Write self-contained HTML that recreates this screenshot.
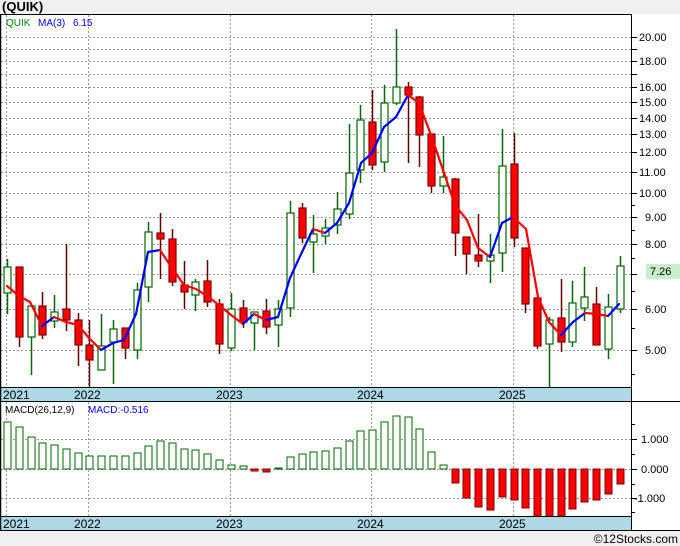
<!DOCTYPE html>
<html><head><meta charset="utf-8"><style>
html,body{margin:0;padding:0;background:#f0f0f0;}
svg{display:block;font-family:"Liberation Sans",sans-serif;}
</style></head><body>
<svg id="s" width="680" height="546" xmlns="http://www.w3.org/2000/svg">
<rect x="0" y="0" width="680" height="546" fill="#f0f0f0"/>
<rect x="0" y="14" width="631" height="373" fill="#fff"/>
<rect x="0" y="402" width="631" height="114" fill="#fff"/>
<rect x="631" y="14" width="49" height="516" fill="#fff"/>
<g id="grid"></g>
<rect x="0" y="387" width="631" height="15" fill="#add8e6"/>
<rect x="0" y="516" width="631" height="14" fill="#add8e6"/>
<g id="chart"></g>
<line x1="0" y1="14.5" x2="632" y2="14.5" stroke="#000"/>
<line x1="0.5" y1="14" x2="0.5" y2="530" stroke="#000" stroke-width="1.5"/>
<line x1="631.5" y1="14" x2="631.5" y2="530" stroke="#000"/>
<line x1="0" y1="387.5" x2="632" y2="387.5" stroke="#000"/>
<line x1="0" y1="401.5" x2="680" y2="401.5" stroke="#000"/>
<line x1="0" y1="516.5" x2="632" y2="516.5" stroke="#000"/>
<line x1="0" y1="530.5" x2="680" y2="530.5" stroke="#000"/>
<text x="2" y="11" font-size="13" font-weight="bold" fill="#000">(QUIK)</text>
<text x="6" y="26" font-size="10" fill="#008000">QUIK</text>
<text x="38" y="26" font-size="10" fill="#0000ff">MA(3)</text>
<text x="73" y="26" font-size="10" fill="#0000ff">6.15</text>
<text x="5" y="413" font-size="10" fill="#000">MACD(26,12,9)</text>
<text x="88" y="413" font-size="10" fill="#0000ff">MACD:-0.516</text>
<g font-size="12" fill="#000">
<text x="3" y="399">2021</text><text x="74" y="399">2022</text><text x="216" y="399">2023</text><text x="357" y="399">2024</text><text x="499" y="399">2025</text>
<text x="3" y="528">2021</text><text x="74" y="528">2022</text><text x="216" y="528">2023</text><text x="357" y="528">2024</text><text x="499" y="528">2025</text>
</g>
<rect x="646" y="264" width="34" height="15" fill="#c8f0c8"/>
<text x="650" y="275" font-size="11" fill="#000">7.26</text>
<g id="axis" font-size="11" fill="#000"></g>
<text x="678" y="543" font-size="12" fill="#000" text-anchor="end">©12Stocks.com</text>
</svg>
<script>
var NS="http://www.w3.org/2000/svg";
function el(p,t,a,txt){var e=document.createElementNS(NS,t);for(var k in a)e.setAttribute(k,a[k]);if(txt!=null)e.textContent=txt;document.getElementById(p).appendChild(e);return e;}
function Y(p){return 350-225.8*Math.log(p/5);}
for(var p=5;p<=20;p++){var y=Math.round(Y(p))+0.5;el("grid","line",{x1:1,y1:y,x2:631,y2:y,stroke:"#999","stroke-dasharray":"2,2"});el("axis","line",{x1:631,y1:y,x2:637,y2:y,stroke:"#000"});}
[4.5,5.5,6.5,7.5,8.5,9.5].forEach(function(p){var y=Math.round(Y(p))+0.5;el("axis","line",{x1:631,y1:y,x2:635,y2:y,stroke:"#000"});});
[[20,"20.00"],[18,"18.00"],[16,"16.00"],[15,"15.00"],[14,"14.00"],[13,"13.00"],[12,"12.00"],[11,"11.00"],[10,"10.00"],[9,"9.00"],[8,"8.00"],[6,"6.00"],[5,"5.00"]].forEach(function(a){el("axis","text",{x:a[0]>=10?639:645,y:Math.round(Y(a[0]))+4},a[1]);});
[[439,"1.000"],[469,"0.000"],[498,"-1.000"]].forEach(function(a){el("grid","line",{x1:1,y1:a[0]+.5,x2:631,y2:a[0]+.5,stroke:"#999","stroke-dasharray":"2,2"});el("axis","line",{x1:631,y1:a[0]+.5,x2:637,y2:a[0]+.5,stroke:"#000"});el("axis","text",{x:a[1][0]=="-"?634:641,y:a[0]+4},a[1]);});
[424,454,484,512].forEach(function(y){el("axis","line",{x1:631,y1:y+.5,x2:635,y2:y+.5,stroke:"#000"});});
[6,88,230,371,513].forEach(function(x){el("grid","line",{x1:x+.5,y1:15,x2:x+.5,y2:387,stroke:"#999","stroke-dasharray":"2,2"});el("grid","line",{x1:x+.5,y1:402,x2:x+.5,y2:516,stroke:"#999","stroke-dasharray":"2,2"});});
var C=[[267,293,259,314,"g"],[267,337,267,347,"r"],[306,337,306,375,"g"],[306,335,292,339,"r"],[312,321,295,328,"g"],[309,320,244,331,"r"],[320,345,313,366,"r"],[345,360,320,387,"r"],[346,370,314,370,"g"],[329,342,320,384,"g"],[328,348,328,359,"r"],[290,350,283,359,"g"],[232,287,222,302,"g"],[233,239,213,279,"r"],[239,282,229,286,"r"],[285,292,261,309,"r"],[282,295,279,311,"g"],[281,302,260,307,"r"],[304,344,299,354,"r"],[309,348,293,351,"g"],[308,322,300,328,"r"],[312,323,312,350,"g"],[311,327,299,334,"r"],[309,325,300,347,"g"],[213,308,201,317,"g"],[208,238,203,243,"r"],[234,242,215,273,"g"],[228,236,219,244,"g"],[209,225,192,234,"g"],[173,214,124,219,"g"],[120,170,105,183,"g"],[122,165,90,170,"r"],[103,162,85,172,"g"],[87,103,29,105,"g"],[87,95,82,163,"r"],[97,135,96,167,"r"],[134,186,134,193,"r"],[177,186,136,193,"g"],[179,233,178,256,"r"],[237,254,237,274,"r"],[255,261,214,267,"r"],[255,261,234,283,"g"],[166,253,129,272,"g"],[164,238,133,247,"r"],[248,304,248,313,"r"],[298,346,298,349,"r"],[320,344,317,387,"g"],[318,342,279,352,"r"],[303,342,281,347,"g"],[297,308,267,321,"g"],[304,345,287,345,"r"],[307,349,294,359,"g"],[266,309,256,313,"g"]];
var M=[422,427,437,443,445,449,453,456,456,456,456,453,446,441,443,449,450,454,460,465,466,471,472,468,457,454,452,451,448,441,431,430,422,416,417,429,452,465,483,498,507,510,497,500,508,516,516,516,509,502,500,494,484];
function X(i){return 7+11.78*i;}
C.forEach(function(c,i){var x=Math.round(X(i));var g=c[4]=="g";
el("chart","line",{x1:x+.5,y1:c[2],x2:x+.5,y2:c[3],stroke:g?"#006600":"#600000","stroke-width":1.5});
el("chart","rect",{x:x-3,y:c[0],width:7,height:Math.max(2,c[1]-c[0]),fill:g?"#fff":"#ff0000",stroke:g?"#006600":"#800000","stroke-width":1.2});});
var P=[[7,286],[19,296],[30,302],[42,326],[54,317],[66,322],[78,325],[89,338],[101,350],[113,343],[124,340],[136,314],[148,252],[160,250],[172,268],[184,285],[196,289],[207,296],[219,305],[231,315],[243,324],[254,314],[266,320],[278,317],[290,278],[302,252],[313,229],[325,233],[337,223],[349,203],[361,163],[372,153],[384,127],[396,117],[408,95],[419,103],[431,135],[443,170],[455,205],[467,220],[478,248],[490,257],[502,223],[513,217],[526,229],[538,297],[549,322],[561,335],[573,322],[585,313],[597,314],[608,316],[619,304]];
for(var i=1;i<P.length;i++){el("chart","line",{x1:P[i-1][0],y1:P[i-1][1],x2:P[i][0],y2:P[i][1],stroke:P[i][1]>P[i-1][1]?"#ff0000":"#0000ff","stroke-width":2.2,"stroke-linecap":"round"});}
M.forEach(function(v,i){var x=Math.round(X(i));var pos=v<469;
el("chart","rect",{x:x-3,y:pos?v:469,width:7,height:Math.max(1,Math.abs(v-469)),fill:pos?"#fff":"#ff0000",stroke:pos?"#006600":"#800000","stroke-width":1});});
</script>
</body></html>
